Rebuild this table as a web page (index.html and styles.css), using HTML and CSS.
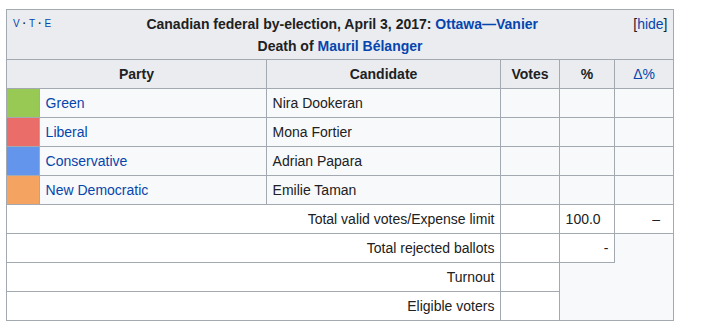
FILE: index.html
```html
<!DOCTYPE html>
<html lang="en">
<head>
<meta charset="utf-8">
<title>Canadian federal by-election, April 3, 2017: Ottawa—Vanier</title>
<link rel="stylesheet" href="styles.css">
</head>
<body>
<div class="page">
<table class="ebox">
  <colgroup>
    <col class="c-sw"><col class="c-party"><col class="c-cand"><col class="c-votes"><col class="c-pct"><col class="c-dpct">
  </colgroup>
  <tr>
    <th class="cap" colspan="6">
      <span class="navbar"><a>V</a><b class="dot">·</b><a>T</a><b class="dot">·</b><a>E</a></span>
      <span class="toggle">[<a>hide</a>]</span>
      Canadian federal by-election, April 3, 2017: <a>Ottawa—Vanier</a><br>
      Death of <a>Mauril Bélanger</a>
    </th>
  </tr>
  <tr class="head">
    <th colspan="2">Party</th>
    <th>Candidate</th>
    <th>Votes</th>
    <th>%</th>
    <th><a class="plain">Δ%</a></th>
  </tr>
  <tr class="cand">
    <td class="sw green"></td>
    <td><a>Green</a></td>
    <td>Nira Dookeran</td>
    <td></td><td></td><td></td>
  </tr>
  <tr class="cand">
    <td class="sw liberal"></td>
    <td><a>Liberal</a></td>
    <td>Mona Fortier</td>
    <td></td><td></td><td></td>
  </tr>
  <tr class="cand">
    <td class="sw conservative"></td>
    <td><a>Conservative</a></td>
    <td>Adrian Papara</td>
    <td></td><td></td><td></td>
  </tr>
  <tr class="cand">
    <td class="sw ndp"></td>
    <td><a>New Democratic</a></td>
    <td>Emilie Taman</td>
    <td></td><td></td><td></td>
  </tr>
  <tr class="total">
    <td colspan="3" class="r">Total valid votes/Expense limit</td>
    <td></td>
    <td>100.0</td>
    <td class="r dash">–</td>
  </tr>
  <tr class="total">
    <td colspan="3" class="r">Total rejected ballots</td>
    <td></td>
    <td class="r">-</td>
  </tr>
  <tr class="total">
    <td colspan="3" class="r">Turnout</td>
    <td></td>
  </tr>
  <tr class="total">
    <td colspan="3" class="r">Eligible voters</td>
    <td></td>
  </tr>
</table>
</div>
</body>
</html>
```

FILE: styles.css
```css
html, body {
  margin: 0;
  padding: 0;
  background: #ffffff;
}
.page {
  padding: 9px 0 0 6px;
  font-family: "Liberation Sans", Arial, sans-serif;
  font-size: 14px;
  color: #202122;
}
a {
  color: #0645ad;
  text-decoration: none;
}
.ebox {
  border-collapse: collapse;
  table-layout: fixed;
  width: 668px;
  background: #f8f9fa;
  border: 1px solid #a2a9b1;
}
.c-sw { width: 33px; }
.c-party { width: 227px; }
.c-cand { width: 234px; }
.c-votes { width: 59px; }
.c-pct { width: 55px; }
.c-dpct { width: 59px; }
.ebox th, .ebox td {
  border: 1px solid #a2a9b1;
  padding: 3px 5.6px;
  line-height: 22px;
  height: 22px;
  text-align: left;
  vertical-align: middle;
}
.ebox th {
  background: #eaecf0;
  font-weight: bold;
  text-align: center;
}
.ebox th.cap {
  text-align: center;
  padding: 3px 5.6px 2px;
  height: 44px;
}
.navbar {
  float: left;
  font-size: 10px;
  font-weight: normal;
  line-height: 22px;
  margin-left: 0.5px;
}
.navbar a { color: #0645ad; }
.navbar .dot {
  font-weight: bold;
  color: #202122;
  padding: 0 3px;
}
.toggle {
  float: right;
  font-weight: normal;
}
.plain { font-weight: normal; }
.sw { padding: 0; }
.green { background: #99c955; }
.liberal { background: #ea6d6a; }
.conservative { background: #6495ed; }
.ndp { background: #f4a460; }
.total td { background: #ffffff; }
.ebox td.r { text-align: right; }
.ebox td.dash { padding-right: 13px; }
```
